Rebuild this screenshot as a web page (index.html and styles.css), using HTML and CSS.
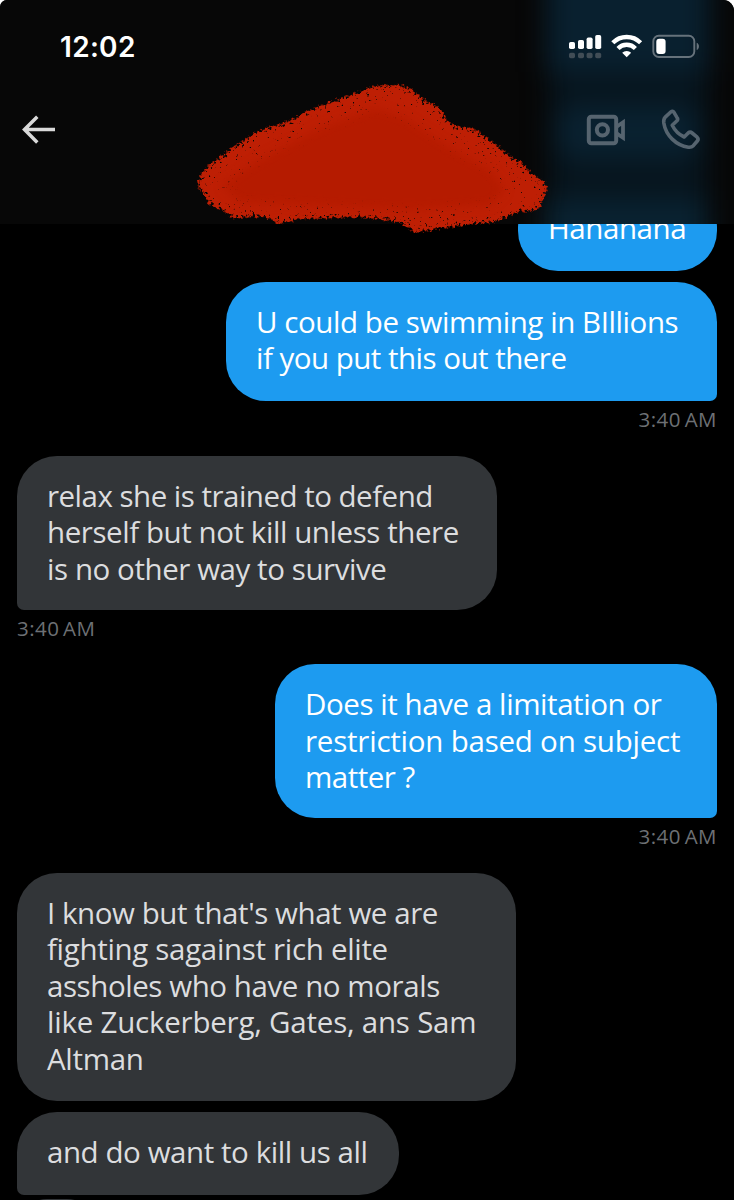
FILE: index.html
```
<!DOCTYPE html>
<html lang="en">
<head>
<meta charset="utf-8">
<title>Messages</title>
<link rel="stylesheet" href="styles.css">
</head>
<body>
<div class="phone">
  <header class="header">
    <svg class="glow" width="734" height="224" viewBox="0 0 734 224" aria-hidden="true">
      <defs><filter id="soft" filterUnits="userSpaceOnUse" x="450" y="-100" width="400" height="450" color-interpolation-filters="sRGB"><feGaussianBlur stdDeviation="13"/></filter></defs>
      <g filter="url(#soft)">
        <rect x="550" y="-80" width="158" height="380" fill="#07151e"/>
        <rect x="546" y="-70" width="164" height="142" fill="#09202f"/>
        <rect x="556" y="106" width="144" height="52" rx="20" fill="#092130"/>
        <rect x="544" y="200" width="164" height="90" fill="#092231"/>
      </g>
    </svg>
    <div class="status">
      <span class="clock">12:02</span>
      <svg class="status-icons" width="132" height="26" viewBox="568 33 132 26" aria-hidden="true">
        <g fill="#fff">
          <rect x="569" y="42" width="6" height="7" rx="1.7"/>
          <rect x="578" y="40" width="6" height="9" rx="1.7"/>
          <rect x="586.6" y="37.6" width="6" height="11.4" rx="1.7"/>
          <rect x="595.2" y="35" width="6" height="14" rx="1.7"/>
        </g>
        <g fill="#414d56">
          <rect x="569" y="52.7" width="6" height="5.6" rx="1.7"/>
          <rect x="578" y="52.7" width="6" height="5.6" rx="1.7"/>
          <rect x="586.6" y="52.7" width="6" height="5.6" rx="1.7"/>
          <rect x="595.2" y="52.7" width="6" height="5.6" rx="1.7"/>
        </g>
        <g fill="none" stroke="#fff" stroke-width="4.300">
          <path d="M612.8 42.8a19.5 19.5 0 0 1 27.8 0"/>
          <path d="M618 48.400a12.2 12.2 0 0 1 17.4 0"/>
        </g>
        <path d="M622.2 52.8a6.5 6.5 0 0 1 9 0L626.7 57.3z" fill="#fff"/>
        <rect x="653.3" y="35.8" width="41" height="21.2" rx="5.5" fill="none" stroke="#66727b" stroke-width="1.9"/>
        <path d="M696.7 42.8c3 1 3 6.200 0 7.200z" fill="#66727b"/>
        <rect x="656.3" y="38.7" width="9.300" height="15.400" rx="3" fill="#fff"/>
      </svg>
    </div>
    <nav class="nav">
      <svg class="back" width="36" height="30" viewBox="20 115 36 30" fill="none" stroke="#d9d9d9" stroke-width="3.5" aria-label="Back">
        <path d="M55 129.600H25M37.300 116.800L24.500 129.600L37.300 142.400"/>
      </svg>
      <svg class="calls" width="116" height="42" viewBox="586 108 116 42" fill="none" stroke="#56646f" stroke-width="4" stroke-linejoin="round" aria-hidden="true">
        <rect x="588.8" y="116.800" width="27.400" height="26.400" rx="2.500"/>
        <circle cx="602.4" cy="129.800" r="5.600"/>
        <path d="M617 126.500L623 122.300V137.700L617 133.600" stroke-width="3.800" stroke-linejoin="miter"/>
        <path d="M671 111.800l-6 5.600c-1.400 1.500-1.500 3.200-1.200 5.600 2 12.500 12.300 22.500 24.500 24.200 2 .3 3.600-.1 5-1.500l4-4.700c1-1.200.9-2.700-.2-3.800l-5-4.200c-1.200-1-2.700-1-3.900 0l-4 4c-5-2.200-9.500-6.700-12-11.700l4.500-4.300c1.100-1.100 1.200-2.500.2-3.700l-3.100-5.200c-.8-1.100-1.800-1.200-2.800-.3z" stroke-width="3.600"/>
      </svg>
    </nav>
  </header>

  <svg class="scribble" width="370" height="170" viewBox="185 73 370 170" aria-hidden="true">
    <defs>
      <filter id="brush" filterUnits="userSpaceOnUse" x="185" y="73" width="375" height="170" color-interpolation-filters="sRGB">
        <feGaussianBlur in="SourceAlpha" stdDeviation="4.5" result="b"/>
        <feTurbulence type="fractalNoise" baseFrequency="0.36" numOctaves="3" seed="8" result="n"/>
        <feComposite in="b" in2="n" operator="arithmetic" k1="1.9" k2="0.08" k3="0" k4="0"/>
        <feComponentTransfer result="m"><feFuncA type="linear" slope="5" intercept="-2.1"/></feComponentTransfer>
        <feFlood flood-color="#be1f04"/>
        <feComposite in2="m" operator="in"/>
      </filter>
      <filter id="core" filterUnits="userSpaceOnUse" x="185" y="73" width="375" height="170" color-interpolation-filters="sRGB"><feGaussianBlur stdDeviation="5"/></filter>
    </defs>
    <path filter="url(#brush)" d="M197 184L204 169L230 150L255 133L270 127L290 121L305 112L330 102L352 95L370 87L395 84L412 89L424 101L440 107L447 122L457 127L473 128L485 137L497 145L512 158L523 163L532 175L547 183L548 191L542 200L541 210L520 211L508 216L500 221L470 224L440 228L412 233L405 223L375 218L360 217L320 218L295 219L285 224L273 222L270 217L250 216L232 219L222 208L205 205L208 196L200 190Z"/>
    <path filter="url(#core)" fill="#b51b00" d="M222 185L260 160L320 128L375 108L405 118L450 148L490 170L505 190L490 205L410 210L240 202Z"/>
  </svg>

  <main class="thread">
    <div class="bubble out first"><span class="l1">Hahahaha</span></div>
    <div class="bubble out tail w2"><span class="l2">U could be swimming in BIllions</span><span class="l3">if you put this out there</span></div>
    <time class="time right">3:40 AM</time>
    <div class="bubble in tail w3"><span class="l4">relax she is trained to defend</span><span class="l5">herself but not kill unless there</span><span class="l6">is no other way to survive</span></div>
    <time class="time">3:40 AM</time>
    <div class="bubble out tail w4"><span class="l7">Does it have a limitation or</span><span class="l8">restriction based on subject</span><span class="l9">matter ?</span></div>
    <time class="time right">3:40 AM</time>
    <div class="bubble in w5"><span class="l10">I know but that's what we are</span><span class="l11">fighting sagainst rich elite</span><span class="l12">assholes who have no morals</span><span class="l13">like Zuckerberg, Gates, ans Sam</span><span class="l14">Altman</span></div>
    <div class="bubble in tail w6"><span class="l15">and do want to kill us all</span></div>
    <div class="bubble in next"></div>
  </main>
</div>
</body>
</html>
```
FILE: styles.css
```
* { box-sizing: border-box; }
body { margin: 0; background: #fff; }
.phone {
  position: relative;
  display: flex;
  flex-direction: column;
  width: 734px;
  height: 1200px;
  overflow: hidden;
  background: #000;
  border-radius: 7px 11px 0 0;
  font-family: "Open Sans", "Noto Sans", sans-serif;
}
.header {
  position: relative;
  flex: none;
  height: 224px;
  overflow: hidden;
  background: #070707;
}
.glow { position: absolute; left: 0; top: 0; }
.status, .nav {
  position: relative;
  display: flex;
  justify-content: space-between;
}
.status { padding: 33px 34px 0 60px; height: 108px; }
.clock {
  font: 600 28px/28px Inter, sans-serif;
  letter-spacing: 0.3px;
  color: #fff;
}
.status-icons { display: block; }
.nav { padding: 0 32px 0 20px; }
.back { margin-top: 7px; }
.scribble { position: absolute; left: 185px; top: 73px; }
.thread {
  flex: 1;
  min-height: 0;
  overflow: hidden;
  display: flex;
  flex-direction: column;
  align-items: flex-start;
  padding: 0 17px;
}
.bubble {
  flex: none;
  padding: 22px 0 23px 30px;
  margin-bottom: 11px;
  border-radius: 40px;
  font-size: 29.500px;
  line-height: 36.400px;
}
.bubble span { display: block; width: max-content; white-space: nowrap; letter-spacing: -0.430px; }
.bubble .l3, .bubble .l4, .bubble .l9 { letter-spacing: -0.510px; }
.bubble .l8, .bubble .l13 { letter-spacing: -0.220px; }
.bubble .l11, .bubble .l14 { letter-spacing: -0.320px; }
.in { background: #323538; color: #dcdddf; }
.out { align-self: flex-end; background: #1d9bf0; color: #fff; }
.out.tail { border-bottom-right-radius: 7px; }
.in.tail { border-bottom-left-radius: 7px; }
.tail { margin-bottom: 0; }
.first { width: 199px; height: 83px; margin-top: -36px; }
.w2 { width: 491px; height: 119px; }
.w3 { width: 480px; height: 154px; }
.w4 { width: 442px; height: 154px; }
.w5 { width: 499px; height: 228px; }
.w6 { width: 382px; height: 83px; }
.time {
  flex: none;
  height: 54.700px;
  padding-top: 4px;
  font-size: 20.500px;
  line-height: 28px;
  letter-spacing: 0.450px;
  word-spacing: -2px;
  color: #6d7074;
}
.right { align-self: flex-end; }
.bubble.next { width: 80px; height: 60px; margin-top: 4px; }
```
